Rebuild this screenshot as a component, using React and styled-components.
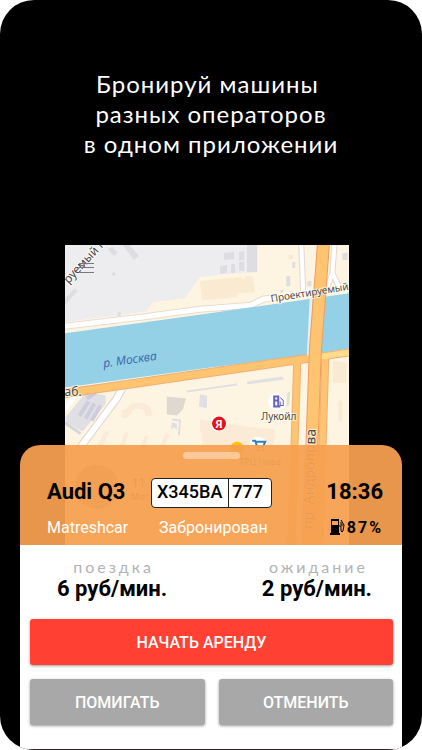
import React from "react";
import styled, { createGlobalStyle, css } from "styled-components";

const GlobalStyle = createGlobalStyle`
  * {
    box-sizing: border-box;
  }
  body {
    margin: 0;
    background-color: #fff;
    font-family: Roboto, "Liberation Sans", sans-serif;
  }
`;

const CityMap = () => (
  <StyledMap
    viewBox="0 0 284 300"
    preserveAspectRatio="xMidYMin slice"
    role="img"
    aria-label="Карта"
  >
    <rect width="284" height="300" fill="#fdf5e1" />
    <path
      d="M0 0H192V27L160 29L135 32L120 53L88 57L82 66L0 77Z"
      fill="#ededf0"
    />
    <g fill="#dddde2">
      <path d="M58 0H65L74 11L69 15Z" />
      <path d="M43 4L48 2L53 8L49 11Z" />
      <path d="M0 54L10 43L13 46L0 60Z" />
      <path d="M47 28L50 27L51 30L48 31Z" />
      <path d="M53 67H56V71H53Z" />
      <path d="M182 0H192V27H182Z" />
      <path d="M159 8L169 7V14L159 15Z" />
      <path d="M174 7L179 6V15L174 16Z" />
      <path d="M155 21L162 20V28L155 29Z" />
      <path d="M166 19H170V28H166ZM174 17H179V26H174Z" />
      <path d="M227 17H230V23H227ZM221 31H225V41H221ZM242 36H246V41H242Z" />
      <path d="M277 8H282V15H277ZM215 45H218V47H215Z" />
    </g>
    <g fill="#fbead2">
      <path d="M135 36L176 32V34L188 33L190 47L172 48V52L137 55Z" />
      <path d="M223 10H228V14H223ZM180 31H187V35H180Z" />
      <path d="M267 115L281 117V137L267 138Z" />
      <path d="M273 155H277V176H273Z" />
    </g>

    <path
      d="M0 81L76 72L135 64L186 60L198 54L212 52"
      fill="none"
      stroke="#e9dccd"
      strokeWidth="7"
    />
    <path
      d="M0 81L76 72L135 64L186 60L198 54L212 52"
      fill="none"
      stroke="#fff"
      strokeWidth="5"
    />
    <g fill="none" stroke="#e4d9d2" strokeWidth="6">
      <path d="M236 0L238 50" />
      <path d="M269 0L267 28L262 42M267 28L274 42" />
    </g>
    <g fill="none" stroke="#fff" strokeWidth="4">
      <path d="M236 0L238 50" />
      <path d="M269 0L267 28L262 42M267 28L274 42" />
    </g>

    <path d="M0 88L145 68L284 48V103L243 110L145 122L0 142Z" fill="#94d1e6" />

    {/* city blocks on the south bank */}
    <g fill="#e0dfe4">
      <path d="M22 146L41 150V158L18 186L2 177L1 172Z" />
      <path d="M135 149L142 150V163L134 161Z" />
      <path d="M107 173L116 174L115 190L113 189L114 176L107 175Z" />
      <path d="M107 177L112 178V184L109 182L106 184Z" />
      <path d="M163 190H173V194H163Z" />
      <path d="M122 145L172 138V140L122 147ZM182 136L217 131L219 134L182 139Z" />
    </g>
    <g stroke="#cdcddd" strokeWidth="4">
      <path d="M15 170L24 156M21 173L30 158M27 175L36 160" />
      <path d="M22 153L31 147" />
    </g>
    <path d="M0 177L16 188" stroke="#d5d5df" strokeWidth="3" />
    <path d="M102 151L121 153L118 164L112 170L102 169Z" fill="#ded8d0" />
    <g fill="#fbead5">
      <path d="M57 171Q55 164 62 163Q66 156 75 157Q88 158 87 171L80 169Q80 163 74 163Q68 162 67 168L61 173Z" />
      <path d="M137 181L155 177L182 181L210 184L208 201H137Z" />
      <path d="M45 186L38 200H33L40 186ZM64 187L60 200H55L60 187ZM84 190L80 200H76L80 190ZM105 188L100 200H95L101 188Z" />
      <path d="M135 174L148 176V186L135 187Z" />
    </g>
    <path d="M222 147L225 146L224 160L221 161Z" fill="#d8e9cf" />
    <path d="M58 142L52 153L17 200L10 212" fill="none" stroke="#dfd4cc" strokeWidth="8" />
    <path d="M58 142L52 153L17 200L10 212" fill="none" stroke="#fff" strokeWidth="6" />
    <path d="M10 151L0 164" stroke="#fff" strokeWidth="5" />

    {/* main roads */}
    <g fill="none" stroke="#f0ae78">
      <path d="M0 148L76 137L145 127L243 113" strokeWidth="9" />
      <path d="M232 114L226 300" strokeWidth="8" />
      <path d="M260 110L254 300" strokeWidth="8" />
      <path d="M243 113L284 107" strokeWidth="8" />
    </g>
    <g fill="none" stroke="#fec46f">
      <path d="M0 148L76 137L145 127L243 113" strokeWidth="7" />
      <path d="M232 114L226 300" strokeWidth="6" />
      <path d="M260 110L254 300" strokeWidth="6" />
      <path d="M243 113L284 107" stroke="#ffdc8c" strokeWidth="6" />
    </g>
    <path d="M246 50L243 110" stroke="#e9eef0" strokeWidth="3" />
    <path d="M258 0L250 105L243 300" fill="none" stroke="#ee9c66" strokeWidth="13" />
    <path d="M258 0L250 105L243 300" fill="none" stroke="#fec46f" strokeWidth="11" />

    <MapLabel size={12} transform="translate(4 39) rotate(-47)">
      руемый пр
    </MapLabel>
    <MapLabel size={10} transform="translate(206 57) rotate(-9)">
      Проектируемый
    </MapLabel>
    <MapLabel size={12} water transform="translate(39 122) rotate(-8)">
      р. Москва
    </MapLabel>
    <MapLabel size={12} x="0" y="150">
      аб.
    </MapLabel>
    <MapLabel size={10} x="196" y="174">
      Лукойл
    </MapLabel>
    <MapLabel size={14} transform="translate(247 283) rotate(-88)">
      пр. Андропова
    </MapLabel>

    <circle cx="212" cy="156" r="9" fill="#fff" />
    <g fill="none" stroke="#6761bd" strokeWidth="2">
      <path d="M209 161V151H213V161M208 161H215M209 155H213" />
      <path d="M215 152L218 155V160H215V156" strokeWidth="1" />
    </g>
    <circle cx="154" cy="178" r="8" fill="#fff" />
    <circle cx="154" cy="178" r="7" fill="#e5121c" />
    <PinLetter x="154" y="182">
      Я
    </PinLetter>
    <circle cx="172" cy="203" r="7" fill="#ffc400" />
    <circle cx="193" cy="200" r="9" fill="#fff" />
    <path
      d="M187 195H190L192 201H198L200 196H190M192 204H194M197 204H199"
      fill="none"
      stroke="#2d82bd"
      strokeWidth="2"
    />
    <MapLabel size={9} x="174" y="219">
      ТРЦ Нора
    </MapLabel>
    <circle cx="32" cy="241" r="22" fill="#a8a29a" />
    <MapLabel size={12} x="67" y="241">
      11
    </MapLabel>
    <MapLabel size={9} x="66" y="254">
      Мос
    </MapLabel>

    <path
      d="M14 18H29M14 22H29M14 27H29"
      stroke="#77777c"
      strokeWidth="1"
      shapeRendering="crispEdges"
    />
  </StyledMap>
);

const FuelIcon = () => (
  <svg width="15" height="16" viewBox="0 0 15 16" aria-hidden="true">
    <path d="M1 0H9V14H10V16H0V14H1Z" fill="#000" />
    <path d="M2 2H8V6H2Z" fill="#f5a35a" />
    <path
      d="M9 7H11V12Q12 14 13 12L14 6L11 1M11 3V6H13"
      fill="none"
      stroke="#000"
      strokeWidth="1"
    />
  </svg>
);

const Rate = ({ label, value }) => (
  <StyledRate>
    <StyledRateLabel>{label}</StyledRateLabel>
    <StyledRateValue>{value}</StyledRateValue>
  </StyledRate>
);

const App = () => (
  <>
    <GlobalStyle />
    <StyledScreen>
      <StyledTitle>
        Бронируй машины&nbsp;
        <br />
        разных операторов
        <br />в одном приложении
      </StyledTitle>
      <StyledStage>
        <CityMap />
        <StyledSheet>
          <StyledHeader>
            <StyledHandle />
            <StyledInfo>
              <StyledCarName>Audi Q3</StyledCarName>
              <StyledPlate>
                <StyledPlateNumber>X345BA</StyledPlateNumber>
                <StyledPlateRegion>777</StyledPlateRegion>
              </StyledPlate>
              <StyledTime>18:36</StyledTime>
              <StyledText>Matreshcar</StyledText>
              <StyledText inset>Забронирован</StyledText>
              <StyledFuel>
                <FuelIcon />
                <span>87%</span>
              </StyledFuel>
            </StyledInfo>
          </StyledHeader>
          <StyledRates>
            <Rate label="поездка" value="6 руб/мин." />
            <Rate label="ожидание" value="2 руб/мин." />
          </StyledRates>
          <StyledActions>
            <StyledButton type="button" primary>
              НАЧАТЬ АРЕНДУ
            </StyledButton>
            <StyledButton type="button">ПОМИГАТЬ</StyledButton>
            <StyledButton type="button">ОТМЕНИТЬ</StyledButton>
          </StyledActions>
          <StyledDivider />
        </StyledSheet>
      </StyledStage>
    </StyledScreen>
  </>
);

const StyledScreen = styled.main`
  min-height: 100vh;
  padding-top: 69px;
  border-radius: 34px;
  overflow: hidden;
  background-color: #000;
`;
const StyledTitle = styled.h1`
  margin: 0 0 86px;
  color: #fff;
  font-family: Lato, "Open Sans", sans-serif;
  font-size: 24px;
  font-weight: 400;
  line-height: 30px;
  letter-spacing: 1px;
  text-align: center;
`;

/* map and sheet share one cell, the sheet starts lower and covers the map */
const StyledStage = styled.div`
  display: grid;
  grid-template-columns: minmax(0, 1fr);
  align-items: start;
  padding: 0 20px;

  > * {
    grid-area: 1 / 1;
  }
`;
const StyledMap = styled.svg`
  display: block;
  width: calc(100% - 98px);
  height: 301px;
  margin-left: 45px;
`;
const MapLabel = styled.text.withConfig({
  shouldForwardProp: (prop) => !["size", "water"].includes(prop),
})`
  font-family: "Noto Sans", sans-serif;
  font-size: ${({ size }) => size}px;
  fill: #4c4845;
  stroke: #fff;
  stroke-width: 2px;
  stroke-opacity: 0.7;
  paint-order: stroke;
  ${({ water }) =>
    water &&
    css`
      font-style: italic;
      fill: #3f6cb0;
      stroke: none;
    `}
`;
const PinLetter = styled.text`
  font-family: Roboto, sans-serif;
  font-size: 11px;
  font-weight: 700;
  text-anchor: middle;
  fill: #fff;
`;

const StyledSheet = styled.section`
  position: relative;
  margin-top: 200px;
`;
const StyledHeader = styled.header`
  height: 100px;
  padding-top: 7px;
  border-radius: 20px 20px 0 0;
  background-color: rgba(246, 159, 80, 0.94);
`;
const StyledHandle = styled.div`
  width: 57px;
  height: 7px;
  margin: 0 auto 18px;
  border-radius: 4px;
  background-color: rgba(255, 255, 255, 0.4);
`;
const StyledInfo = styled.div`
  display: grid;
  grid-template-columns: 104px 1fr auto;
  grid-template-rows: 32px 20px;
  row-gap: 8px;
  align-items: center;
  padding: 0 19px 0 27px;
`;
const StyledCarName = styled.h2`
  margin: 0;
  font-size: 22px;
  font-weight: 700;
  line-height: 24px;
  padding-bottom: 2px;
`;
const StyledPlate = styled.div`
  display: flex;
  justify-self: start;
  height: 30px;
  border: 1px solid #222;
  border-radius: 4px;
  font-size: 18px;
  font-weight: 500;
  line-height: 26px;
  background-color: #fff;
`;
const StyledPlateNumber = styled.span`
  padding: 0 6px 0 5px;
`;
const StyledPlateRegion = styled.span`
  padding: 0 8px 0 3px;
  border-left: 1px solid #222;
`;
const StyledTime = styled.time`
  padding-bottom: 2px;
  font-size: 22px;
  font-weight: 700;
  line-height: 24px;
  text-align: right;
`;
const StyledText = styled.span.withConfig({
  shouldForwardProp: (prop) => prop !== "inset",
})`
  padding-left: ${({ inset }) => (inset ? 8 : 0)}px;
  color: #fff;
  font-size: 16px;
`;
const StyledFuel = styled.div`
  display: flex;
  align-items: center;
  justify-content: flex-end;
  gap: 2px;
  font-size: 16px;
  font-weight: 700;
  letter-spacing: 2px;
`;

const StyledRates = styled.div`
  display: flex;
  justify-content: space-between;
  padding: 12px 30px 18px 37px;
  background-color: #fff;
`;
const StyledRate = styled.div`
  text-align: center;
`;
const StyledRateLabel = styled.div`
  padding-left: 3px;
  color: #b3b3b3;
  font-family: Lato, sans-serif;
  font-size: 16px;
  line-height: 20px;
  letter-spacing: 3px;
`;
const StyledRateValue = styled.div`
  font-size: 22px;
  font-weight: 700;
  line-height: 24px;
`;
const StyledActions = styled.div`
  display: grid;
  grid-template-columns: 1fr 1fr;
  gap: 14px;
  padding: 0 9px 24px 10px;
  background-color: #fff;
`;
const StyledButton = styled.button.withConfig({
  shouldForwardProp: (prop) => prop !== "primary",
})`
  height: 46px;
  padding: 0;
  border: none;
  border-radius: 3px;
  color: #fff;
  font-family: inherit;
  font-size: 16px;
  font-weight: 500;
  cursor: pointer;
  background-color: #a8a8a8;
  box-shadow: 0 1px 3px rgba(0, 0, 0, 0.4);
  ${({ primary }) =>
    primary &&
    css`
      grid-column: 1 / -1;
      padding-right: 20px;
      background-color: #ff4033;
    `}
`;
const StyledDivider = styled.div`
  padding: 0 9px;
  background-color: #fff;

  &::after {
    content: "";
    display: block;
    height: 1px;
    background-color: #2b2528;
  }
`;

export default App;
